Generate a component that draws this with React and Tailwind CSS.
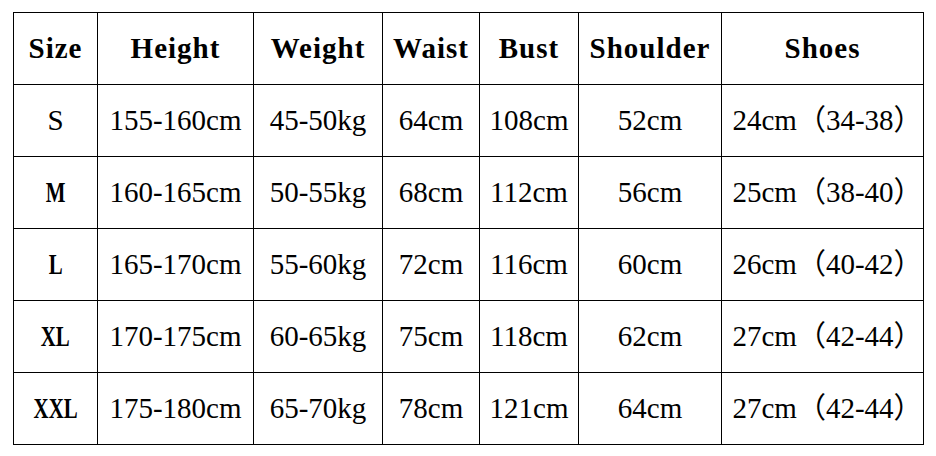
const headers = ['Size', 'Height', 'Weight', 'Waist', 'Bust', 'Shoulder', 'Shoes']

const rows = [
  ['S', '155-160cm', '45-50kg', '64cm', '108cm', '52cm', '24cm（34-38）'],
  ['M', '160-165cm', '50-55kg', '68cm', '112cm', '56cm', '25cm（38-40）'],
  ['L', '165-170cm', '55-60kg', '72cm', '116cm', '60cm', '26cm（40-42）'],
  ['XL', '170-175cm', '60-65kg', '75cm', '118cm', '62cm', '27cm（42-44）'],
  ['XXL', '175-180cm', '65-70kg', '78cm', '121cm', '64cm', '27cm（42-44）'],
]

const widths = ['w-[84px]', 'w-[156px]', 'w-[129px]', 'w-[97px]', 'w-[99px]', 'w-[143px]', 'w-[202px]']

export default function App() {
  return (
    <div className="w-[936px] h-[456px] bg-white pt-[12px] pl-[13px] font-[family-name:Liberation_Serif,Noto_Sans_CJK_SC,serif] text-black">
      <table className="table-fixed border-collapse w-[910px]">
        <colgroup>
          {widths.map((w, i) => (
            <col key={i} className={w} />
          ))}
        </colgroup>
        <thead>
          <tr className="h-[72px]">
            {headers.map((h) => (
              <th key={h} className="border-[1.5px] border-black p-0 text-center align-middle text-[29px] font-bold tracking-[1px] leading-none">
                {h}
              </th>
            ))}
          </tr>
        </thead>
        <tbody>
          {rows.map((r) => (
            <tr key={r[0]} className="h-[72px]">
              {r.map((cell, i) => (
                <td
                  key={i}
                  className={
                    i === 6
                      ? 'border-[1.5px] border-black p-0 pl-[10px] text-center align-middle text-[29px] leading-none whitespace-nowrap'
                      : 'border-[1.5px] border-black p-0 text-center align-middle text-[29px] leading-none whitespace-nowrap'
                  }
                >
                  {i === 0 ? (
                    <span className={cell === 'S' ? 'inline-block' : 'inline-block font-bold scale-x-[0.72]'}>
                      {cell}
                    </span>
                  ) : (
                    cell
                  )}
                </td>
              ))}
            </tr>
          ))}
        </tbody>
      </table>
    </div>
  )
}
